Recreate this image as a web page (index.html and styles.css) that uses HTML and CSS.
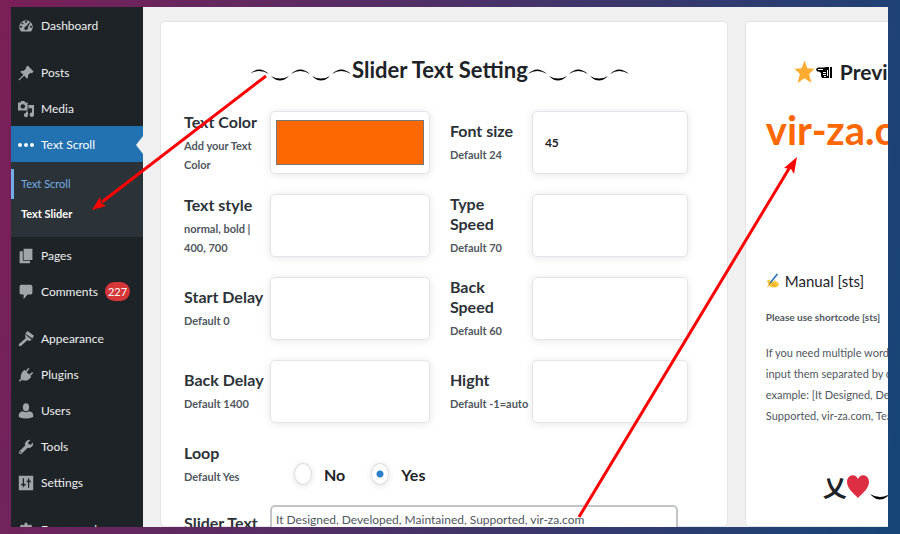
FILE: index.html
```html
<!DOCTYPE html>
<html lang="en">
<head>
<meta charset="utf-8">
<title>Slider Text Setting</title>
<link rel="stylesheet" href="styles.css">
</head>
<body>
<div class="app">
  <nav class="sidebar" aria-label="Admin menu">
    <ul class="menu">
      <li><a href="#"><svg class="icon" viewBox="0 0 20 20"><path fill-rule="evenodd" d="M3.700 17A8.500 8.500 0 1 1 16.300 17zM10 3.500a1.200 1.200 0 1 0 .01 0zM5.500 5.500a1.200 1.200 0 1 0 .01 0zM14.500 5.300l-4.500 5.200a2.200 2.200 0 1 0 2.200 1.500l3-6zM3.700 9.800a1.200 1.200 0 1 0 .01 0zM16.200 9.800a1.200 1.200 0 1 0 .01 0z"/></svg>Dashboard</a></li>
      <li class="section"><a href="#"><svg class="icon" viewBox="0 0 20 20"><path d="M9.800 3 12 .5 19.500 8 17.500 10.200l-1.900-.5-3.200 3.200c.5 1.500.2 3.300-.9 4.300L7.800 13.500 1.500 19.500l-1-1L6.700 12.200 2.800 8.500c1.300-1.300 2.800-1.500 4.200-1.100l3.200-3.200z"/></svg>Posts</a></li>
      <li><a href="#"><svg class="icon" viewBox="0 0 20 20"><path fill-rule="evenodd" d="M0 2h3l1-2h4l1 2h3v10H0zM6 4a2.800 2.800 0 1 0 .01 0zM13 5h7v12a2.800 2.800 0 1 1-2.500-2.600V9H13zM10 13h2.500v4.500A2.600 2.600 0 1 1 10 15z"/></svg>Media</a></li>
      <li class="active"><a href="#"><svg class="icon" viewBox="0 0 20 20"><circle cx="2.500" cy="10" r="2.400"/><circle cx="10" cy="10" r="2.400"/><circle cx="17.500" cy="10" r="2.400"/></svg>Text Scroll</a>
        <ul class="submenu">
          <li class="hovered"><a href="#">Text Scroll</a></li>
          <li class="current"><a href="#">Text Slider</a></li>
        </ul>
      </li>
      <li><a href="#"><svg class="icon" viewBox="0 0 20 20"><path d="M7 1h11v14H7zM2 4h4v12h9v3H2z"/></svg>Pages</a></li>
      <li><a href="#"><svg class="icon" viewBox="0 0 20 20"><path d="M4 1h12q2 0 2 2v8q0 2-2 2h-4l-5 6v-6H4q-2 0-2-2V3q0-2 2-2z"/></svg>Comments<span class="badge">227</span></a></li>
      <li class="section"><a href="#"><svg class="icon" viewBox="0 0 20 20"><path d="m12 0 8 6-2 3.500L9 3zM8.500 4l8.500 6.500-2 2-3.500-1-7.500 7q-1.500 1-2.600-.2-1-1.200.2-2.500L9.500 9z"/></svg>Appearance</a></li>
      <li><a href="#"><svg class="icon" viewBox="0 0 20 20"><path d="M12.500 1.500q1.500-.5 1.500 1L11 6.500l3 3 3.500-3q1.500 0 1.200 1.500L15.500 11l1 1q-3 5.500-7.500 5-2.500-.2-4-1.200L2.500 18.500 1 17.200l2.500-2.500Q2 9 8 3.500l1.500 1.500z"/></svg>Plugins</a></li>
      <li><a href="#"><svg class="icon" viewBox="0 0 20 20"><ellipse cx="10" cy="5.300" rx="3.900" ry="4.900"/><path d="M6.200 10.200Q10 13 13.800 10.200 19 11 19 15v2.500Q10 21.500 1 17.500V15q0-4 5.200-4.800z"/></svg>Users</a></li>
      <li><a href="#"><svg class="icon" viewBox="0 0 20 20"><path fill-rule="evenodd" d="M15.500 1.200 12.700 4l.6 2.700 2.700.6 2.800-2.800Q19.500 9 16 10.600q-2.500 1-4 .2l-7.500 7.500q-1.500 1-2.800-.2-1.200-1.300 0-2.700L9 8Q8 5.500 10 3q2.500-2.500 5.500-1.800zM3.500 15.600a.9.9 0 1 0 .01 0z"/></svg>Tools</a></li>
      <li><a href="#"><svg class="icon" viewBox="0 0 20 20"><path fill-rule="evenodd" d="M1 1h18v18H1zM6 4v7H4v2h2l1 3 1-3h1.500v-2H7.500V4zM12.500 4v3H11v2h1.500v7H14V9h2V7h-2V4z"/></svg>Settings</a></li>
      <li class="section"><a href="#"><svg class="icon" viewBox="0 0 20 20"><path fill-rule="evenodd" d="M8.500 1h3l.5 2.500 1.500.6L15.700 3l2 2-1.200 2.200.6 1.500 2.400.5v3l-2.400.5-.6 1.500 1.200 2.300-2 2-2.200-1.200-1.500.6-.5 2.300h-3L8 17.900l-1.500-.6-2.200 1.200-2-2 1.200-2.300-.6-1.500L.5 12.200v-3l2.400-.5.6-1.500L2.300 5l2-2 2.200 1.100L8 3.500zM10 7a3.500 3.500 0 1 0 .01 0z"/></svg>Framework</a></li>
    </ul>
  </nav>

  <main class="content">
    <section class="card settings">
      <h1 class="title">
        <svg class="wave" viewBox="0 0 102 16"><use href="#wave-shape"/></svg>Slider Text Setting<svg class="wave" viewBox="0 0 102 16"><g id="wave-shape"><path d="M0 6Q9-3 19 6 9 0 0 6ZM41 6Q50-3 60 6 50 0 41 6ZM82 6Q91-3 101 6 91 0 82 6Z"/><path d="M21 8Q30 13 39 8 30 17 21 8ZM62 8Q71 13 80 8 71 17 62 8Z"/></g></svg>
      </h1>
      <form class="form">
        <label class="field-label" for="color"><b>Text Color</b><small>Add your Text Color</small></label>
        <input class="box color" id="color" type="color" value="#fe6804">
        <label class="field-label second" for="size"><b>Font size</b><small>Default 24</small></label>
        <input class="box" id="size" type="text" value="45">

        <label class="field-label" for="style"><b>Text style</b><small>normal, bold | 400, 700</small></label>
        <input class="box" id="style" type="text">
        <label class="field-label second" for="type-speed"><b>Type<br>Speed</b><small>Default 70</small></label>
        <input class="box" id="type-speed" type="text">

        <label class="field-label" for="start"><b>Start Delay</b><small>Default 0</small></label>
        <input class="box" id="start" type="text">
        <label class="field-label second" for="back-speed"><b>Back<br>Speed</b><small>Default 60</small></label>
        <input class="box" id="back-speed" type="text">

        <label class="field-label" for="back"><b>Back Delay</b><small>Default 1400</small></label>
        <input class="box" id="back" type="text">
        <label class="field-label second" for="height"><b>Hight</b><small>Default -1=auto</small></label>
        <input class="box" id="height" type="text">

        <div class="field-label" id="loop-label"><b>Loop</b><small>Default Yes</small></div>
        <div class="radios" role="radiogroup" aria-labelledby="loop-label">
          <label><input type="radio" name="loop">No</label>
          <label><input type="radio" name="loop" checked>Yes</label>
        </div>

        <label class="field-label words-label" for="words"><b>Slider Text</b></label>
        <textarea class="words" id="words" rows="2">It Designed, Developed, Maintained, Supported, vir-za.com</textarea>
      </form>
    </section>

    <section class="card preview">
      <h2 class="preview-title"><svg class="star" viewBox="0 0 22 24"><path d="M11 0 14 8.200 21.500 8.600 15.800 14.200 18.300 23.500 11 18.500 3.700 23.500 6.200 14.200.5 8.600 8 8.200Z"/></svg><svg class="hand" viewBox="0 0 16 12"><path d="M0 2 2 .5h6L10 0h3v11H6L5 9V6L3 4.500H1Z"/><path class="gap" d="M2 2h5v1H2ZM7 5h3v1H7ZM7 7h3v1H7ZM8 9h2v1H8ZM11 3h1v6h-1Z"/><path d="M14 0h2v11h-2Z"/></svg>Preview</h2>
      <p class="sample">vir-za.com</p>
      <h3 class="manual"><svg class="pen" viewBox="0 0 16 18"><path fill="#ffc83d" d="M1 9Q3 6 5 9L8 10 10 8 14 11Q16 13 14 15 9 18 4 15L1 16 3 12Z"/><path fill="none" stroke="#e29a20" d="m7 12 4 1m-4 1 4 1"/><path fill="none" stroke="#2d78b5" stroke-width="2" d="M13 1 5 11"/><path stroke="#444" d="m5 11-1 2"/></svg>Manual [sts]</h3>
      <p class="shortcode">Please use shortcode [sts]</p>
      <p class="help"><span>If you need multiple words,</span><span>input them separated by commas</span><span>example: [It Designed, Developed</span><span>Supported, vir-za.com, Team</span></p>
      <div class="sign"><span class="cross">乂</span><svg class="heart" viewBox="0 0 22 24"><path d="M11 23C6 18 0 13 0 7 0-1 9-2 11 4 13-2 22-1 22 7c0 6-6 11-11 16Z"/></svg><svg class="smile" viewBox="0 0 22 8"><path d="M1 1Q11 7 21 1 11 12 1 1Z"/></svg></div>
    </section>
  </main>
</div>
<svg class="arrows" viewBox="0 0 900 534" aria-hidden="true">
  <path class="line" d="M266 76 102 202M579 517 790 167"/>
  <path class="head" d="m92 210 8-13 1 6 5 3ZM797 157l-3 17-3-5-7-1Z"/>
</svg>
</body>
</html>
```

FILE: styles.css
```css
* { box-sizing: border-box; }

body {
  margin: 0;
  height: 100vh;
  padding: 7px 12px 7px 11px;
  overflow: hidden;
  position: relative;
  background: linear-gradient(100deg, #7b1f58 0%, #154577 100%);
  font-family: Lato, "Open Sans", sans-serif;
  font-size: 11px;
  color: #1d2327;
}

h1, h2, h3, p, ul { margin: 0; padding: 0; }
ul { list-style: none; }

.app {
  display: flex;
  height: 100%;
  overflow: hidden;
  background: #f0f0f1;
}

/* Sidebar */
.sidebar {
  flex: none;
  width: 132px;
  background: #1d2327;
}

.menu > li > a {
  display: flex;
  align-items: center;
  gap: 7px;
  height: 36px;
  padding: 1px 0 0 7px;
  color: #f0f0f1;
  font-size: 12px;
  text-decoration: none;
}

.menu > .section { margin-top: 11px; }
.icon { flex: none; width: 16px; height: 18px; fill: #a0a5aa; }

.menu > .active > a {
  position: relative;
  background: #2271b1;
  color: #fff;
}
.active .icon { fill: #fff; }

.menu > .active > a::after {
  content: "";
  position: absolute;
  right: 0;
  border: 9px solid transparent;
  border-left-width: 0;
  border-right: 7px solid #f0f0f1;
}

.submenu { padding: 7px 0 8px; background: #2c3338; }
.submenu a {
  display: block;
  padding-left: 10px;
  color: #fff;
  line-height: 30px;
  text-decoration: none;
}
.submenu .hovered a {
  padding-left: 7px;
  border-left: 3px solid #72aee6;
  color: #72aee6;
}
.submenu .current a { font-weight: 700; }

.badge {
  padding: 0 3px;
  border-radius: 10px;
  background: #d63638;
  color: #fff;
  font-size: 11px;
  line-height: 19px;
}

/* Content */
.content {
  display: flex;
  flex: 1;
  gap: 17px;
  min-width: 0;
  padding: 14px 0 0 17px;
}

.card {
  border: 1px solid #e4e4e6;
  border-radius: 5px;
  background: #fff;
}

.settings { flex: 0 0 78%; padding: 30px 39px 0 23px; }

.title {
  display: flex;
  justify-content: center;
  align-items: center;
  padding-left: 8px;
  font-size: 22px;
  line-height: 36px;
  white-space: nowrap;
}
.wave { flex: none; width: 102px; height: 16px; margin-top: 12px; }

.form {
  display: grid;
  grid-template-columns: 86px 160fr 102px 156fr;
  grid-template-rows: repeat(4, 63px) 42px auto;
  row-gap: 20px;
  padding-top: 23px;
}

.field-label { align-self: center; color: #2c3338; }
.field-label b { display: block; font-size: 16px; line-height: 20px; white-space: nowrap; }
.field-label small {
  display: block;
  padding-top: 4px;
  color: #50575e;
  font-size: 11px;
  font-weight: 700;
  line-height: 19px;
}
.second { padding-left: 20px; white-space: nowrap; }

.box {
  width: 100%;
  height: 63px;
  padding: 0 12px;
  border: 1px solid #e2e4e7;
  border-radius: 5px;
  background: #fff;
  box-shadow: 0 1px 8px rgb(0 0 0 / 10%);
  color: #1d2327;
  font: 700 12px Lato, "Open Sans", sans-serif;
}
.color { padding: 5px; }
.color::-webkit-color-swatch-wrapper { padding: 3px 0; }
.color::-webkit-color-swatch { border: 1px solid #777; border-radius: 0; }

.radios {
  display: flex;
  grid-column: 2 / -1;
  align-self: end;
  gap: 26px;
  padding-left: 24px;
}
.radios label {
  display: flex;
  align-items: center;
  gap: 12px;
  font-size: 16px;
  font-weight: 700;
}
.radios input {
  appearance: none;
  width: 18px;
  height: 22px;
  margin: 0;
  border: 1px solid #dcdcde;
  border-radius: 50%;
  box-shadow: 0 1px 6px rgb(0 0 0 / 12%);
}
.radios input:checked { background: radial-gradient(circle, #2c7fc9 0 3px, #fff 4px); }

.words-label { align-self: start; padding-top: 8px; }
.words {
  grid-column: 2 / -1;
  margin-right: 10px;
  padding: 5px 4px;
  border: 2px solid #c3c4c7;
  border-radius: 5px;
  color: #50575e;
  font: 12px Lato, "Open Sans", sans-serif;
  resize: none;
}

/* Preview */
.preview {
  flex: 0 0 280px;
  padding: 32px 20px 0;
  white-space: nowrap;
}
.preview-title {
  display: flex;
  align-items: center;
  padding-left: 28px;
  font-size: 21px;
  line-height: 36px;
}
.star { width: 21px; height: 24px; fill: #ffac33; }
.hand { width: 16px; height: 12px; margin: 2px 8px 0 1px; }
.gap { fill: #fff; }
.sample {
  padding-top: 12px;
  color: #fe6804;
  font-size: 40px;
  font-weight: 700;
  line-height: 56px;
}
.manual {
  display: flex;
  align-items: center;
  gap: 5px;
  padding-top: 105px;
  font-size: 15px;
  font-weight: 400;
  line-height: 36px;
}
.pen { width: 14px; height: 18px; }
.shortcode { padding-top: 8px; color: #50575e; font-size: 10px; font-weight: 700; line-height: 20px; }
.help { padding-top: 15px; color: #50575e; line-height: 21px; }
.help span { display: block; }
.sign { display: flex; align-items: center; padding: 45px 0 0 57px; }
.cross { font: 700 24px/32px "Noto Sans CJK SC", sans-serif; }
.heart { width: 22px; height: 24px; fill: #dd2e44; }
.smile { width: 22px; height: 8px; margin-top: 20px; }

.arrows {
  position: absolute;
  inset: 0;
  width: 100%;
  height: 100%;
  pointer-events: none;
}
.line { fill: none; stroke: #f00; stroke-width: 3; }
.head { fill: #f00; }
```
